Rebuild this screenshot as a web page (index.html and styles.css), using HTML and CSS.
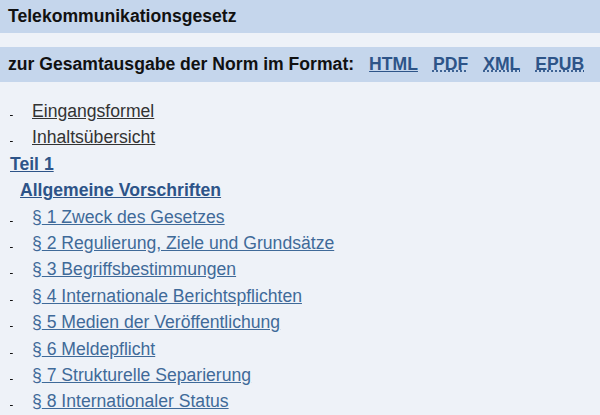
FILE: index.html
```html
<!DOCTYPE html>
<html>
<head>
    <title>Telekommunikationsgesetz</title>
    <link rel="stylesheet" href="styles.css">
</head>
<body>
    <div class="page">
        <h1 class="title-bar">Telekommunikationsgesetz</h1>

        <div class="format-bar">
            <span class="format-label">zur Gesamtausgabe der Norm im Format:</span>
            <a href="#" class="format-link">HTML</a>
            <a href="#" class="format-link abbr">PDF</a>
            <a href="#" class="format-link abbr">XML</a>
            <a href="#" class="format-link abbr">EPUB</a>
        </div>

        <div class="toc">
            <div class="toc-row">
                <a href="#" class="toc-mark">&nbsp;</a>
                <a href="#" class="toc-plain">Eingangsformel</a>
            </div>
            <div class="toc-row">
                <a href="#" class="toc-mark">&nbsp;</a>
                <a href="#" class="toc-plain">Inhaltsübersicht</a>
            </div>
            <div class="toc-row">
                <a href="#" class="toc-part">Teil 1</a>
            </div>
            <div class="toc-row">
                <a href="#" class="toc-section">Allgemeine Vorschriften</a>
            </div>
            <div class="toc-row">
                <a href="#" class="toc-mark">&nbsp;</a>
                <span class="toc-norm">§<a href="#">&nbsp;1 Zweck des Gesetzes</a></span>
            </div>
            <div class="toc-row">
                <a href="#" class="toc-mark">&nbsp;</a>
                <span class="toc-norm">§<a href="#">&nbsp;2 Regulierung, Ziele und Grundsätze</a></span>
            </div>
            <div class="toc-row">
                <a href="#" class="toc-mark">&nbsp;</a>
                <span class="toc-norm">§<a href="#">&nbsp;3 Begriffsbestimmungen</a></span>
            </div>
            <div class="toc-row">
                <a href="#" class="toc-mark">&nbsp;</a>
                <span class="toc-norm">§<a href="#">&nbsp;4 Internationale Berichtspflichten</a></span>
            </div>
            <div class="toc-row">
                <a href="#" class="toc-mark">&nbsp;</a>
                <span class="toc-norm">§<a href="#">&nbsp;5 Medien der Veröffentlichung</a></span>
            </div>
            <div class="toc-row">
                <a href="#" class="toc-mark">&nbsp;</a>
                <span class="toc-norm">§<a href="#">&nbsp;6 Meldepflicht</a></span>
            </div>
            <div class="toc-row">
                <a href="#" class="toc-mark">&nbsp;</a>
                <span class="toc-norm">§<a href="#">&nbsp;7 Strukturelle Separierung</a></span>
            </div>
            <div class="toc-row">
                <a href="#" class="toc-mark">&nbsp;</a>
                <span class="toc-norm">§<a href="#">&nbsp;8 Internationaler Status</a></span>
            </div>
        </div>
    </div>
</body>
</html>
```

FILE: styles.css
```css
body {
    font-family: "Liberation Sans", Arial, sans-serif;
    margin: 0;
    background: #eef2f8;
    color: #111;
}
.title-bar {
    margin: 0;
    height: 33px;
    line-height: 33px;
    padding-left: 8px;
    background: #c5d6ec;
    font-size: 17.6px;
    font-weight: bold;
}
.format-bar {
    margin-top: 14px;
    height: 35px;
    display: flex;
    align-items: center;
    gap: 15px;
    padding-left: 8px;
    background: #c5d6ec;
    font-size: 17.6px;
    font-weight: bold;
}
.format-link {
    color: #2d5488;
}
.format-link.abbr {
    text-decoration: underline dotted;
}
.toc {
    padding-top: 16px;
    font-size: 17.6px;
    line-height: 26.4px;
}
.toc-row {
    display: flex;
    padding-left: 10px;
}
.toc-mark {
    display: inline-block;
    width: 6px;
    margin-right: 16px;
    color: #111;
    font-size: 10px;
}
.toc-plain {
    color: #333;
}
.toc-part {
    color: #2d5488;
    font-weight: bold;
}
.toc-section {
    color: #2d5488;
    font-weight: bold;
    margin-left: 10px;
}
.toc-norm,
.toc-norm a {
    color: #3f6a99;
}
```
